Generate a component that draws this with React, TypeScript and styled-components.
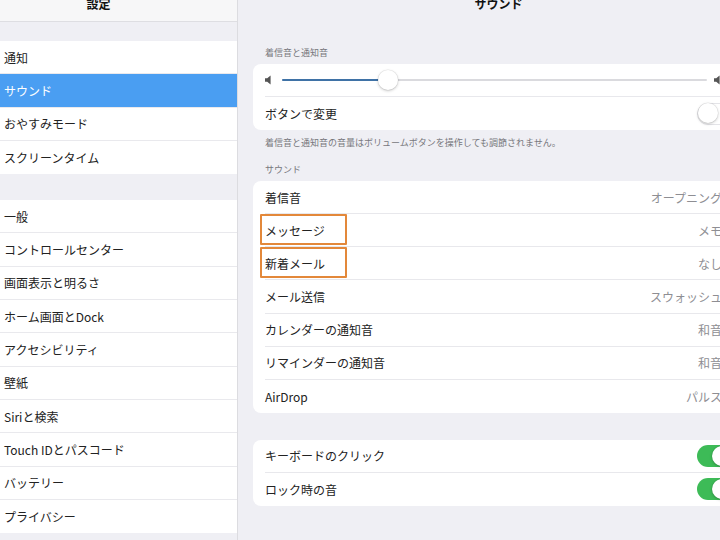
import React from 'react';
import styled, { createGlobalStyle } from 'styled-components';

const GlobalStyle = createGlobalStyle`
  html, body {
    margin: 0;
    padding: 0;
    width: 720px;
    height: 540px;
    overflow: hidden;
    background: #efeff4;
  }
  body {
    font-family: 'Noto Sans CJK JP', 'Noto Sans', sans-serif;
    color: #1c1c1e;
    -webkit-font-smoothing: antialiased;
  }
`;

const sidebarTop = ['通知', 'サウンド', 'おやすみモード', 'スクリーンタイム'];
const sidebarMain = [
  '一般',
  'コントロールセンター',
  '画面表示と明るさ',
  'ホーム画面とDock',
  'アクセシビリティ',
  '壁紙',
  'Siriと検索',
  'Touch IDとパスコード',
  'バッテリー',
  'プライバシー',
];

const sounds = [
  { label: '着信音', value: 'オープニング' },
  { label: 'メッセージ', value: 'メモ', marked: true },
  { label: '新着メール', value: 'なし', marked: true },
  { label: 'メール送信', value: 'スウォッシュ' },
  { label: 'カレンダーの通知音', value: '和音' },
  { label: 'リマインダーの通知音', value: '和音' },
  { label: 'AirDrop', value: 'パルス' },
];

const SpeakerIcon: React.FC<{ loud?: boolean }> = ({ loud }) => (
  <svg width={loud ? 14 : 7} height="10" viewBox={loud ? '0 0 14 10' : '0 0 7 10'}>
    <path d="M0 3.2h2.2L5.6 0.4v9.2L2.2 6.8H0z" fill="#555" />
    {loud && (
      <>
        <path d="M7.5 3.2a2.4 2.4 0 0 1 0 3.6" stroke="#555" strokeWidth="1.1" fill="none" />
        <path d="M9.3 1.6a4.6 4.6 0 0 1 0 6.8" stroke="#555" strokeWidth="1.1" fill="none" />
      </>
    )}
  </svg>
);

const App: React.FC = () => {
  return (
    <>
      <GlobalStyle />
      <Screen>
        <Sidebar>
          <SideHeader>
            <HeaderTitle>設定</HeaderTitle>
          </SideHeader>
          <SideGroup>
            {sidebarTop.map((t) => (
              <SideRow key={t} selected={t === 'サウンド'}>
                {t}
              </SideRow>
            ))}
          </SideGroup>
          <SideGroup>
            {sidebarMain.map((t) => (
              <SideRow key={t}>{t}</SideRow>
            ))}
          </SideGroup>
        </Sidebar>

        <Detail>
          <DetailHeader>
            <HeaderTitle>サウンド</HeaderTitle>
          </DetailHeader>

          <SectionLabel>着信音と通知音</SectionLabel>
          <Card>
            <Row>
              <SliderWrap>
                <SpeakerIcon />
                <Track>
                  <TrackFill style={{ width: '25%' }} />
                  <Thumb style={{ left: '25%' }} />
                </Track>
                <SpeakerIcon loud />
              </SliderWrap>
            </Row>
            <Row>
              <RowLabel>ボタンで変更</RowLabel>
              <Toggle on={false}>
                <Knob on={false} />
              </Toggle>
            </Row>
          </Card>
          <Footnote>着信音と通知音の音量はボリュームボタンを操作しても調節されません。</Footnote>

          <SectionLabel compact>サウンド</SectionLabel>
          <Card>
            {sounds.map((s) => (
              <Row key={s.label}>
                {s.marked && <Marker />}
                <RowLabel>{s.label}</RowLabel>
                <RowValue>{s.value}</RowValue>
              </Row>
            ))}
          </Card>

          <Card spaced>
            <Row>
              <RowLabel>キーボードのクリック</RowLabel>
              <Toggle on>
                <Knob on />
              </Toggle>
            </Row>
            <Row>
              <RowLabel>ロック時の音</RowLabel>
              <Toggle on>
                <Knob on />
              </Toggle>
            </Row>
          </Card>
        </Detail>
      </Screen>
    </>
  );
};

export default App;

const Screen = styled.div`
  display: flex;
  width: 760px;
  height: 540px;
  overflow: hidden;
`;

const Sidebar = styled.div`
  width: 237px;
  flex-shrink: 0;
  background: #efeff4;
  border-right: 1px solid #dcdce0;
`;

const SideHeader = styled.div`
  height: 21px;
  background: #f7f7f8;
  border-bottom: 1px solid #dedee2;
  display: flex;
  justify-content: center;
  align-items: flex-start;
  padding-right: 40px;
  margin-bottom: 19px;
`;

const HeaderTitle = styled.div`
  font-size: 12px;
  font-weight: 700;
  line-height: 12px;
  margin-top: -2px;
  color: #111;
`;

const SideGroup = styled.div`
  background: #fff;
  margin-bottom: 26px;
`;

const SideRow = styled.div<{ selected?: boolean }>`
  height: 33.3px;
  box-sizing: border-box;
  display: flex;
  align-items: center;
  padding-left: 4px;
  font-size: 12px;
  color: ${(p) => (p.selected ? '#fff' : '#222')};
  background: ${(p) => (p.selected ? '#4a9ef2' : '#fff')};
  border-bottom: 1px solid #e9e9ed;

  &:last-child {
    border-bottom: none;
  }
`;

const Detail = styled.div`
  width: 519px;
  flex-shrink: 0;
  background: #efeff4;
  padding: 0 13px 0 15px;
  box-sizing: border-box;
`;

const DetailHeader = styled.div`
  height: 22px;
  display: flex;
  justify-content: center;
  align-items: flex-start;
`;

const SectionLabel = styled.div<{ compact?: boolean }>`
  height: ${(p) => (p.compact ? '17px' : '42px')};
  margin-top: ${(p) => (p.compact ? '15px' : '0')};
  box-sizing: border-box;
  display: flex;
  align-items: flex-end;
  padding: 0 0 5px 12px;
  font-size: 9px;
  line-height: 12px;
  color: #77777c;
`;

const Footnote = styled.div`
  padding: 7px 0 0 12px;
  font-size: 9px;
  line-height: 12px;
  color: #77777c;
  white-space: nowrap;
`;

const Card = styled.div<{ spaced?: boolean }>`
  background: #fff;
  border-radius: 8px;
  margin-top: ${(p) => (p.spaced ? '27px' : '0')};
`;

const Row = styled.div`
  position: relative;
  height: 33.1px;
  box-sizing: border-box;
  margin-left: 12px;
  display: flex;
  align-items: center;
  justify-content: space-between;
  border-bottom: 1px solid #e8e8ec;

  &:last-child {
    border-bottom: none;
  }
`;

const RowLabel = styled.span`
  font-size: 12px;
  color: #222;
`;

const RowValue = styled.span`
  font-size: 12px;
  color: #8e8e93;
  padding-right: 22px;
`;

const Marker = styled.div`
  position: absolute;
  left: -5px;
  top: 0;
  bottom: 1px;
  width: 87px;
  border: 2px solid #e3883a;
  box-sizing: border-box;
  border-radius: 1px;
  pointer-events: none;
`;

const SliderWrap = styled.div`
  flex: 1;
  display: flex;
  align-items: center;
  gap: 10px;
  padding-right: 16px;
`;

const Track = styled.div`
  position: relative;
  flex: 1;
  height: 2px;
  background: #dadade;
  border-radius: 1px;
  margin-right: -3px;
`;

const TrackFill = styled.div`
  position: absolute;
  left: 0;
  top: 0;
  height: 2px;
  background: #3f72a6;
  border-radius: 1px;
`;

const Thumb = styled.div`
  position: absolute;
  top: -9px;
  width: 20px;
  height: 20px;
  margin-left: -10px;
  border-radius: 50%;
  background: #fff;
  box-shadow: 0 1px 3px rgba(0, 0, 0, 0.22), 0 0 0 0.5px rgba(0, 0, 0, 0.08);
`;

const Toggle = styled.div<{ on: boolean }>`
  position: relative;
  width: 36px;
  height: 22px;
  box-sizing: border-box;
  border-radius: 11px;
  margin-right: 11px;
  background: ${(p) => (p.on ? '#3dbb57' : '#fff')};
  border: ${(p) => (p.on ? 'none' : '1.5px solid #e4e4e8')};
`;

const Knob = styled.div<{ on: boolean }>`
  position: absolute;
  top: ${(p) => (p.on ? '1px' : '-0.5px')};
  left: ${(p) => (p.on ? '15px' : '-0.5px')};
  width: 20px;
  height: 20px;
  border-radius: 50%;
  background: #fff;
  box-shadow: 0 1px 3px rgba(0, 0, 0, 0.22), 0 0 0 0.5px rgba(0, 0, 0, 0.08);
`;
